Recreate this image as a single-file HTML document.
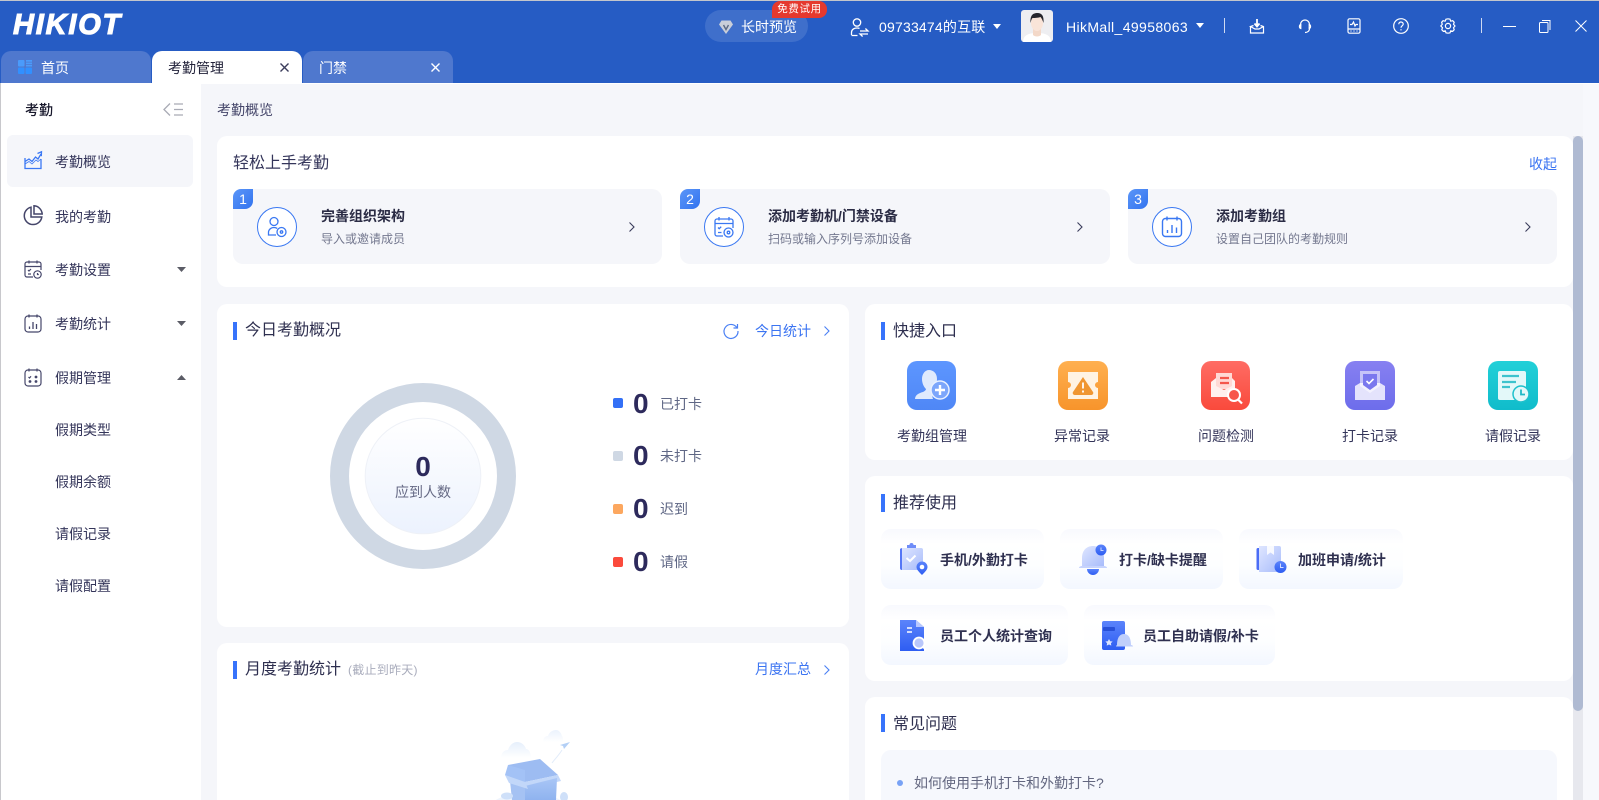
<!DOCTYPE html>
<html lang="zh"><head><meta charset="utf-8"><title>考勤</title>
<style>
*{box-sizing:border-box;margin:0;padding:0}
html,body{width:1599px;height:800px;overflow:hidden;background:#fff}
body{position:relative;font-family:"Liberation Sans","Noto Sans CJK SC",sans-serif;color:#2e2f4f;font-size:14px}
.a{position:absolute}
.t{position:absolute;white-space:nowrap;line-height:20px;height:20px}
svg{position:absolute;overflow:visible}
.card{position:absolute;background:#fff;border-radius:10px}
.bar{position:absolute;width:4px;height:18px;background:#3773fb}
.h{position:absolute;white-space:nowrap;font-size:16px;line-height:22px;color:#2e2f4f}
.blue{color:#3b74f2}
.w{color:#fff}
.nav{position:absolute;left:55px;white-space:nowrap;line-height:20px;color:#34355a}
.step{position:absolute;top:189px;height:75px;background:#f5f6fa;border-radius:10px}
.badge{position:absolute;left:0;top:0;width:20px;height:20px;background:linear-gradient(135deg,#5b96f8,#3273ef);border-radius:8px 0 8px 0;color:#fff;font-size:14px;line-height:20px;text-align:center}
.st{position:absolute;white-space:nowrap;font-size:14px;font-weight:700;line-height:20px;color:#2b2c45}
.ss{position:absolute;white-space:nowrap;font-size:12px;line-height:18px;color:#74788f}
.qi{position:absolute;top:361px;width:49px;height:49px;border-radius:10px}
.ql{position:absolute;top:426px;width:100px;text-align:center;line-height:20px;color:#34355a}
.chip{position:absolute;height:60px;border-radius:10px;background:linear-gradient(180deg,#f8f9fe 0%,#fff 25%,#fdfeff 60%,#f3f7ff 100%)}
.cl{position:absolute;white-space:nowrap;font-weight:700;font-size:14px;line-height:20px;color:#2f3050}
.sq{position:absolute;left:613px;width:10px;height:10px;border-radius:2px}
.n{position:absolute;left:633px;font-size:28px;font-weight:700;line-height:32px;color:#2d2a5c}
.l{position:absolute;left:660px;line-height:20px;color:#5f6785}
</style></head><body>

<!-- header -->
<div class="a" style="left:0;top:0;width:1599px;height:83px;background:#265cc4"></div>
<div class="a" style="left:0;top:0;width:1599px;height:1px;background:#c4c6cc"></div>
<div class="t w" style="left:13px;top:9px;height:33px;line-height:33px;font-size:29px;font-weight:700;font-style:italic;letter-spacing:1.800px;-webkit-text-stroke:1.100px #fff">HIKIOT</div>

<div class="a" style="left:705px;top:10px;width:103px;height:32px;border-radius:16px;background:#3f6fcb"></div>
<svg style="left:718px;top:19px" width="16" height="16" viewBox="0 0 16 16"><path d="M3.500 1.500h9L15 5.500 8 15 1 5.500z" fill="#c9ced9"/><path d="M5.500 6 8 10.500 10.500 6" fill="none" stroke="#5c6a84" stroke-width="1.400"/></svg>
<div class="t w" style="left:741px;top:17px">长时预览</div>
<div class="a w" style="left:772px;top:1px;width:55px;height:17px;background:#e5392e;border-radius:8px 8px 8px 0;font-size:10.500px;line-height:17px;text-align:center;letter-spacing:.6px">免费试用</div>

<svg style="left:850px;top:17px" width="20" height="22" viewBox="0 0 20 22" fill="none" stroke="#fff" stroke-width="1.300"><circle cx="7" cy="5.500" r="3.700"/><path d="M1.500 18v-2.500c0-2.600 2.200-4.500 5.500-4.500 1 0 1.700.1 2.500.5M1.500 18.500h6"/><path d="M10 14h8l-2.600-2.500M18 17h-8l2.600 2.500"/></svg>
<div class="t w" style="left:879px;top:17px;letter-spacing:.2px">09733474的互联</div>
<svg style="left:993px;top:24px" width="8" height="5"><path d="M0 0h8L4 5z" fill="#fff"/></svg>
<div class="a" style="left:1021px;top:10px;width:32px;height:32px;border-radius:3px;background:#eeeef1;overflow:hidden">
<svg style="left:0;top:0" width="32" height="32" viewBox="0 0 32 32"><path d="M2 32c0-7 6-9 14-9s14 2 14 9z" fill="#fff"/><path d="M12 18h8v7c-2 2-6 2-8 0z" fill="#f3d8c8"/><ellipse cx="16" cy="13" rx="6" ry="8" fill="#f9e4d8"/><path d="M9.500 13C9 5 12 3 16.500 3S23 6 22.500 13c-1-3-2-5-3-6-3 1-7 1-8 1-1 1-1.500 3-2 5z" fill="#26262c"/></svg></div>
<div class="t w" style="left:1066px;top:17px;letter-spacing:.38px">HikMall_49958063</div>
<svg style="left:1196px;top:23px" width="8" height="5"><path d="M0 0h8L4 5z" fill="#fff"/></svg>
<div class="a" style="left:1224px;top:18px;width:1px;height:15px;background:#cfdaf2"></div>
<svg style="left:1249px;top:18px" width="16" height="16" viewBox="0 0 16 16" fill="none" stroke="#fff" stroke-width="1.200"><path d="M1.500 8.500V15h13V8.500l-3-1M4.500 7.500l-3 1 4.500 2.500h4l4.500-2.500"/><path d="M8 1v6.500M5.500 5.500 8 8.500l2.500-3" stroke-width="1.800"/></svg>
<svg style="left:1297px;top:18px" width="16" height="16" viewBox="0 0 16 16" fill="none" stroke="#fff" stroke-width="1.200"><path d="M3.500 8.500V6.500a4.500 4.500 0 0 1 9 0M12.500 9v1.500c0 2.500-2 4-4.500 4"/><path d="M3.800 6.500C2 7 2 10 3.800 10.500zM12.200 6.500c1.800.5 1.800 3.500 0 4z"/></svg>
<svg style="left:1346px;top:18px" width="16" height="16" viewBox="0 0 16 16" fill="none" stroke="#fff" stroke-width="1.200"><rect x="2" y=".8" width="12" height="14.400" rx="1.500"/><path d="M2 11h12M4 6.500h2l1.500-2.500L9 8l1-1.500h2M4.500 13h1M7.500 13h1M10.500 13h1"/></svg>
<svg style="left:1393px;top:18px" width="16" height="16" viewBox="0 0 16 16" fill="none" stroke="#fff" stroke-width="1.200"><circle cx="8" cy="8" r="7.300"/><path d="M5.800 6.200C5.800 4.800 6.800 4 8 4s2.200.9 2.200 2.100C10.200 7.800 8 7.900 8 9.700"/><path d="M8 11.200v1.200"/></svg>
<svg style="left:1440px;top:17px" width="16" height="18" viewBox="0 0 16 18" fill="none" stroke="#fff" stroke-width="1.200"><path d="M6 1.200 8 .8l2 .4.700 2 2-.5 1.500 1.600-.7 2 1.500 1.700-1.500 1.700.7 2-1.500 1.600-2-.5-.7 2-2 .4-2-.4-.7-2-2 .5-1.500-1.600.7-2L.8 8l1.500-1.700-.7-2 1.500-1.600 2 .5z" transform="translate(0 1)"/><circle cx="8" cy="9" r="2.600"/></svg>
<div class="a" style="left:1481px;top:18px;width:1px;height:15px;background:#cfdaf2"></div>
<div class="a" style="left:1503px;top:26px;width:13px;height:1px;background:#fff"></div>
<svg style="left:1539px;top:20px" width="12" height="13" viewBox="0 0 12 13" fill="none" stroke="#fff" stroke-width="1"><rect x=".5" y="2.500" width="8.500" height="10" rx="1"/><path d="M3 .5h8v9.500"/></svg>
<svg style="left:1575px;top:20px" width="12" height="12" viewBox="0 0 12 12" fill="none" stroke="#fff" stroke-width="1"><path d="M.5.500l11 11M11.500.500l-11 11"/></svg>

<!-- tabs -->
<div class="a" style="left:1px;top:51px;width:150px;height:32px;background:#4f78ce;border-radius:10px 10px 0 0"></div>
<div class="a" style="left:152px;top:51px;width:150px;height:33px;background:#fff;border-radius:10px 10px 0 0"></div>
<div class="a" style="left:303px;top:51px;width:150px;height:32px;background:#4f78ce;border-radius:10px 10px 0 0"></div>
<svg style="left:18px;top:60px" width="14" height="14" viewBox="0 0 14 14"><rect width="6.500" height="6.500" rx="1" fill="#4a9bfb"/><path d="M8 0h6v1.700H8zM8 2.500h6v1.700H8zM8 5h6v1.500H8z" fill="#4a9bfb"/><rect y="7.500" width="6.500" height="6.500" rx="1" fill="#3190ff"/><rect x="7.500" y="7.500" width="6.500" height="6.500" rx="1" fill="#3190ff"/></svg>
<div class="t w" style="left:41px;top:58px">首页</div>
<div class="t" style="left:168px;top:58px;color:#22223a">考勤管理</div>
<svg style="left:280px;top:63px" width="9" height="9" fill="none" stroke="#3b3d5c" stroke-width="1.400"><path d="M.5.500l8 8M8.500.500l-8 8"/></svg>
<div class="t w" style="left:319px;top:58px">门禁</div>
<svg style="left:431px;top:63px" width="9" height="9" fill="none" stroke="#fff" stroke-width="1.400"><path d="M.5.500l8 8M8.500.500l-8 8"/></svg>

<!-- layout bg -->
<div class="a" style="left:0;top:83px;width:1px;height:717px;background:#c8c8cc"></div>
<div class="a" style="left:201px;top:84px;width:1398px;height:716px;background:#f5f6fa"></div>
<div class="a" style="left:1583px;top:84px;width:16px;height:716px;background:#f7f8fc"></div>

<!-- sidebar -->
<div class="t" style="left:25px;top:100px;color:#18182c;font-weight:500">考勤</div>
<svg style="left:163px;top:103px" width="21" height="13" fill="none" stroke="#a9abb5" stroke-width="1.300"><path d="M7 .5 1 6.500l6 6M11 1h9M11 6.500h9M11 12h9"/></svg>
<div class="a" style="left:7px;top:135px;width:186px;height:52px;background:#f5f6fa;border-radius:6px"></div>
<svg style="left:24px;top:151px" width="18" height="19" viewBox="0 0 18 19" fill="none" stroke="#3b78f4" stroke-width="1.300"><path d="M1 7v10.500h16V8"/><path d="M1 10.500 5 8l3 2.500L11.500 6 14 8l3-5"/><path d="M13.500 2.500 17.500.8l-.2 4.400"/><path d="M1 13l4-2.500 3 2.500 4-4 2 1.500 3-2.500" stroke-width=".8"/></svg>
<div class="nav blue" style="top:152px">考勤概览</div>
<svg style="left:23px;top:205px" width="20" height="20" viewBox="0 0 20 20" fill="none" stroke="#45466a" stroke-width="1.500"><path d="M8 2.200A8.800 8.800 0 1 0 18.800 12H8z"/><path d="M11 .8A8.800 8.800 0 0 1 19.200 9H11z"/></svg>
<div class="nav" style="top:207px">我的考勤</div>
<svg style="left:24px;top:260px" width="18" height="19" viewBox="0 0 18 19" fill="none" stroke="#45466a" stroke-width="1.200"><path d="M9 17H3a2 2 0 0 1-2-2V4a2 2 0 0 1 2-2h12a2 2 0 0 1 2 2v6M1 6.500h16M5 .5v3M13 .5v3M4 10l1 1 2-2M4 14h3"/><circle cx="13.500" cy="14.500" r="3.700"/><path d="M13.500 13v1.500h1.300"/></svg>
<div class="nav" style="top:260px">考勤设置</div>
<svg style="left:177px;top:267px" width="9" height="5"><path d="M0 0h9L4.500 5z" fill="#5b5c66"/></svg>
<svg style="left:24px;top:314px" width="18" height="19" viewBox="0 0 18 19" fill="none" stroke="#45466a" stroke-width="1.200"><rect x="1" y="2" width="16" height="16" rx="3"/><path d="M5 .5v3M13 .5v3M5.500 15v-2.500M9 15V8M12.500 15v-5" stroke-width="1.300"/></svg>
<div class="nav" style="top:314px">考勤统计</div>
<svg style="left:177px;top:321px" width="9" height="5"><path d="M0 0h9L4.500 5z" fill="#5b5c66"/></svg>
<svg style="left:24px;top:368px" width="18" height="19" viewBox="0 0 18 19" fill="none" stroke="#45466a" stroke-width="1.200"><rect x="1" y="2" width="16" height="16" rx="3"/><path d="M5 .5v3M13 .5v3"/><path d="M4.500 9l1 1 1.500-1.800"/><circle cx="12" cy="9" r="1.400" fill="#45466a" stroke="none"/><circle cx="6" cy="13.500" r="1.400" fill="#45466a" stroke="none"/><circle cx="12" cy="13.500" r="1.400" fill="#45466a" stroke="none"/></svg>
<div class="nav" style="top:368px">假期管理</div>
<svg style="left:177px;top:375px" width="9" height="5"><path d="M0 5h9L4.500 0z" fill="#5b5c66"/></svg>
<div class="nav" style="top:420px">假期类型</div>
<div class="nav" style="top:472px">假期余额</div>
<div class="nav" style="top:524px">请假记录</div>
<div class="nav" style="top:576px">请假配置</div>

<!-- breadcrumb -->
<div class="t" style="left:217px;top:100px;color:#45466a">考勤概览</div>

<!-- card 1 -->
<div class="card" style="left:217px;top:136px;width:1356px;height:151px"></div>
<div class="h" style="left:233px;top:153px;color:#34355a">轻松上手考勤</div>
<div class="t blue" style="left:1529px;top:154px">收起</div>

<div class="step" style="left:233px;width:429px"><div class="badge">1</div></div>
<svg style="left:257px;top:207px" width="40" height="40" viewBox="0 0 40 40" fill="none" stroke="#3a78f2"><circle cx="20" cy="20" r="19.500" fill="#fff"/><g stroke-width="1.300"><circle cx="17" cy="14.500" r="4"/><path d="M19 28h-7.500v-2.500c0-3 2.500-5 5.500-5 1.200 0 2.300.3 3.200.9"/><circle cx="24.500" cy="25" r="4.500"/><circle cx="24.500" cy="25" r="1.200"/></g></svg>
<div class="st" style="left:321px;top:206px">完善组织架构</div>
<div class="ss" style="left:321px;top:230px">导入或邀请成员</div>
<svg style="left:629px;top:222px" width="6" height="10" fill="none" stroke="#3b3d5c" stroke-width="1.100"><path d="M.5.500 5 5 .5 9.500"/></svg>

<div class="step" style="left:680px;width:430px"><div class="badge">2</div></div>
<svg style="left:704px;top:207px" width="40" height="40" viewBox="0 0 40 40" fill="none" stroke="#3a78f2"><circle cx="20" cy="20" r="19.500" fill="#fff"/><g stroke-width="1.300"><path d="M19 29h-6a2 2 0 0 1-2-2V14a2 2 0 0 1 2-2h14a2 2 0 0 1 2 2v7M11 16.500h18M15 10v3.500M25 10v3.500M14 20.500l1.200 1.200 2-2M14 25.500h3.500"/><circle cx="24.500" cy="25.500" r="4.500"/><circle cx="24.500" cy="25.500" r="1.300"/></g></svg>
<div class="st" style="left:768px;top:206px">添加考勤机/门禁设备</div>
<div class="ss" style="left:768px;top:230px">扫码或输入序列号添加设备</div>
<svg style="left:1077px;top:222px" width="6" height="10" fill="none" stroke="#3b3d5c" stroke-width="1.100"><path d="M.5.500 5 5 .5 9.500"/></svg>

<div class="step" style="left:1128px;width:429px"><div class="badge">3</div></div>
<svg style="left:1152px;top:207px" width="40" height="40" viewBox="0 0 40 40" fill="none" stroke="#3a78f2"><circle cx="20" cy="20" r="19.500" fill="#fff"/><g stroke-width="1.400"><rect x="10.500" y="11.500" width="19" height="18" rx="3"/><path d="M15 9.500v4M25 9.500v4M15.500 26v-3M20 26v-8M24.500 26v-5.500"/></g></svg>
<div class="st" style="left:1216px;top:206px">添加考勤组</div>
<div class="ss" style="left:1216px;top:230px">设置自己团队的考勤规则</div>
<svg style="left:1525px;top:222px" width="6" height="10" fill="none" stroke="#3b3d5c" stroke-width="1.100"><path d="M.5.500 5 5 .5 9.500"/></svg>

<!-- today card -->
<div class="card" style="left:217px;top:304px;width:632px;height:323px"></div>
<div class="bar" style="left:233px;top:322px"></div>
<div class="h" style="left:245px;top:320px">今日考勤概况</div>
<svg style="left:723px;top:323px" width="16" height="16" viewBox="0 0 16 16" fill="none" stroke="#4a80f4" stroke-width="1.200"><path d="M13.800 4.500A7 7 0 1 0 15 8"/><path d="M14.500 1v4h-4"/></svg>
<div class="t blue" style="left:755px;top:321px">今日统计</div>
<svg style="left:824px;top:326px" width="6" height="10" fill="none" stroke="#4a80f4" stroke-width="1.100"><path d="M.5.500 5 5 .5 9.500"/></svg>

<svg style="left:323px;top:376px" width="200" height="200" viewBox="0 0 200 200"><defs><linearGradient id="dg" x1="0" y1="0" x2="0" y2="1"><stop offset="0" stop-color="#fff"/><stop offset="1" stop-color="#ecf2fe"/></linearGradient></defs><circle cx="100" cy="100" r="83.500" fill="none" stroke="#cfd8e4" stroke-width="19"/><circle cx="100" cy="100" r="57.800" fill="url(#dg)" stroke="#eef1f7" stroke-width="1"/></svg>
<div class="a" style="left:373px;top:451px;width:100px;text-align:center;font-size:28px;font-weight:700;line-height:32px;color:#2d2a5c">0</div>
<div class="a" style="left:373px;top:482px;width:100px;text-align:center;line-height:20px;color:#666a85">应到人数</div>

<div class="sq" style="top:398px;background:#3370f6"></div><div class="n" style="top:388px">0</div><div class="l" style="top:394px">已打卡</div>
<div class="sq" style="top:451px;background:#cfd8e4"></div><div class="n" style="top:440px">0</div><div class="l" style="top:446px">未打卡</div>
<div class="sq" style="top:504px;background:#fca75f"></div><div class="n" style="top:493px">0</div><div class="l" style="top:499px">迟到</div>
<div class="sq" style="top:557px;background:#fb4a3c"></div><div class="n" style="top:546px">0</div><div class="l" style="top:552px">请假</div>

<!-- monthly card -->
<div class="card" style="left:217px;top:643px;width:632px;height:170px"></div>
<div class="bar" style="left:233px;top:661px"></div>
<div class="h" style="left:245px;top:659px">月度考勤统计</div>
<div class="t" style="left:348px;top:660px;font-size:12px;letter-spacing:.25px;color:#a9acbc">(截止到昨天)</div>
<div class="t blue" style="left:755px;top:659px">月度汇总</div>
<svg style="left:824px;top:665px" width="6" height="10" fill="none" stroke="#4a80f4" stroke-width="1.100"><path d="M.5.500 5 5 .5 9.500"/></svg>
<svg style="left:440px;top:700px" width="160" height="100" viewBox="0 0 160 100"><defs><linearGradient id="c1" x1="0" y1="0" x2="0" y2="1"><stop offset="0" stop-color="#e6effc"/><stop offset="1" stop-color="#fff"/></linearGradient><linearGradient id="b1" x1="0" y1="0" x2="0" y2="1"><stop offset="0" stop-color="#a9c6f6"/><stop offset="1" stop-color="#8fb3ef"/></linearGradient></defs>
<ellipse cx="88" cy="108" rx="38" ry="15" fill="#eef4fd"/>
<path d="M61 58c0-5 3-8 7-8 2-6 6-8 9-8 4 0 8 3 9 7 3 0 5 4 5 9z" fill="url(#c1)"/>
<path d="M103 42c0-4 2-6 5-6 1-4 5-6 8-6 3 0 5 3 6 6 1 1 1 3 1 6z" fill="url(#c1)" opacity=".8"/>
<path d="M120 45 130 42l-6 7-1-3z" fill="#b4d0f6"/><path d="M122 50c-3 5-7 9-10 13" stroke="#e2ecfa" fill="none"/>
<path d="M68 65l32-6 18 16-33 7z" fill="#9dbcf2"/>
<path d="M68 65 65 75l5 6 15 1V70z" fill="#a3c2f6"/>
<path d="M70 81l15 5v14H72z" fill="#a5c2f3"/>
<path d="M85 82l33-7 3 6-33 8-3 12z" fill="#c2d7f9"/>
<path d="M85 86l32-8-1 22H85z" fill="url(#b1)"/>
<path d="M65 75l20 7 3 7-19-6z" fill="#c2d7f9"/>
<ellipse cx="67" cy="96" rx="6" ry="3.500" fill="#cfe0f9"/><ellipse cx="124" cy="97" rx="4" ry="5" fill="#cfe0f9"/></svg>

<!-- quick -->
<div class="card" style="left:865px;top:304px;width:708px;height:156px"></div>
<div class="bar" style="left:881px;top:322px"></div>
<div class="h" style="left:893px;top:321px">快捷入口</div>

<div class="qi" style="left:907px;background:linear-gradient(#5d96ff,#4f87f6)"><svg width="49" height="49" viewBox="0 0 49 49"><path d="M8 38c0-4 4-6 8-7 2-1 3-2 3-3-3-3-4-7-4-10 0-5 3-9 7-9s8 3 8 9c0 2-.5 4-1 6-4 2-5 8-3 14z" fill="#dfeafd"/><circle cx="33" cy="29" r="9" fill="#7ca6fb" stroke="#e8f0ff" stroke-width="1.500"/><path d="M28 29h10M33 24v10" stroke="#fff" stroke-width="2.400"/></svg></div>
<div class="qi" style="left:1058px;width:50px;background:linear-gradient(#ffb050,#f7942b)"><svg width="50" height="49" viewBox="0 0 50 49"><path d="M10 11h30v10a3 3 0 0 0 0 6v11H10V27a3 3 0 0 0 0-6z" fill="#fff3e3"/><path d="M25 16l10 15a2 2 0 0 1-2 3H17a2 2 0 0 1-2-3z" fill="#f09631"/><path d="M25 21.500v6M25 29.500v2" stroke="#fff" stroke-width="1.800"/></svg></div>
<div class="qi" style="left:1201px;background:linear-gradient(#ff6c64,#f94a3c)"><svg width="49" height="49" viewBox="0 0 49 49"><path d="M15 12h16v16H15z" fill="#ffd9d5"/><path d="M19 17h9M19 22h9" stroke="#f4574c" stroke-width="2.200"/><path d="M10 21l5-4v8l8 4 8-4v-8l3 3v16H10z" fill="#fff0ee"/><circle cx="33" cy="34" r="6" fill="#f7564b" stroke="#fff" stroke-width="2"/><path d="M37 38.500l4 4" stroke="#fff" stroke-width="2.200"/></svg></div>
<div class="qi" style="left:1345px;width:50px;background:linear-gradient(#8780f1,#6d6deb)"><svg width="50" height="49" viewBox="0 0 50 49"><path d="M10 25l5-3h20l5 3v14H10z" fill="#e4e3fc"/><path d="M15 10h20v15l-10 7-10-7z" fill="#fff" opacity=".55"/><path d="M18 13h14v11l-7 5-7-5z" fill="#7a78ee"/><path d="M21.500 20l2.500 2.500 4.500-4.500" fill="none" stroke="#fff" stroke-width="1.600"/></svg></div>
<div class="qi" style="left:1488px;width:50px;background:linear-gradient(#22d0d8,#10bccb)"><svg width="50" height="49" viewBox="0 0 50 49"><rect x="10" y="10" width="28" height="29" rx="2" fill="#e3f8f9"/><path d="M14 15h17M14 21h14M14 26h8" stroke="#3dc3cd" stroke-width="2.200"/><circle cx="33" cy="33" r="8" fill="#e3f8f9" stroke="#1ec0cc" stroke-width="1.500"/><path d="M33 28.500V33.500h4" fill="none" stroke="#1fb9c6" stroke-width="1.800"/></svg></div>
<div class="ql" style="left:882px">考勤组管理</div>
<div class="ql" style="left:1032px">异常记录</div>
<div class="ql" style="left:1176px">问题检测</div>
<div class="ql" style="left:1320px">打卡记录</div>
<div class="ql" style="left:1463px">请假记录</div>

<!-- recommended -->
<div class="card" style="left:865px;top:476px;width:708px;height:205px"></div>
<div class="bar" style="left:881px;top:494px"></div>
<div class="h" style="left:893px;top:493px">推荐使用</div>
<svg width="0" height="0"><defs><linearGradient id="ig" x1="0" y1="0" x2="1" y2="1"><stop offset="0" stop-color="#dfe6ff"/><stop offset="1" stop-color="#a8bcfb"/></linearGradient><linearGradient id="ib" x1="0" y1="0" x2="0" y2="1"><stop offset="0" stop-color="#5b84fb"/><stop offset="1" stop-color="#2e5df2"/></linearGradient></defs></svg>

<div class="chip" style="left:881px;top:529px;width:163px"></div>
<svg style="left:899px;top:543px" width="30" height="34" viewBox="0 0 30 34"><path d="M1 5h21a2 2 0 0 1 2 2v20H3a2 2 0 0 1-2-2z" fill="url(#ig)"/><path d="M1 6v19a2 2 0 0 0 2 2V5z" fill="#5576f6"/><path d="M8 5h9V2h-2.500a2 2 0 0 0-4 0H8z" fill="#6e8cf8"/><path d="M7.500 15l3.500 3 5.500-5.500" fill="none" stroke="#fff" stroke-width="2"/><path d="M23 32c-3-3-5.500-5.500-5.500-8a5.500 5.500 0 0 1 11 0c0 2.500-2.500 5-5.500 8z" fill="url(#ib)"/><circle cx="23" cy="24" r="2.300" fill="#fff"/></svg>
<div class="cl" style="left:940px;top:550px">手机/外勤打卡</div>

<div class="chip" style="left:1060px;top:529px;width:163px"></div>
<svg style="left:1078px;top:544px" width="30" height="32" viewBox="0 0 30 32"><path d="M4 22V14C4 6 9 2 15 2s11 4 11 12v8z" fill="url(#ig)"/><path d="M1 24c0-1.500 2-2 3-2h22c1 0 3 .5 3 2z" fill="#c6d3fd"/><path d="M9 25h12c0 3-2.500 6-6 6s-6-3-6-6z" fill="url(#ib)"/><circle cx="23" cy="6" r="5.500" fill="url(#ib)"/><path d="M23 3.500V6.500h2.500" fill="none" stroke="#c9d6ff" stroke-width="1"/></svg>
<div class="cl" style="left:1119px;top:550px">打卡/缺卡提醒</div>

<div class="chip" style="left:1239px;top:529px;width:164px"></div>
<svg style="left:1256px;top:545px" width="32" height="30" viewBox="0 0 32 30"><path d="M2 3h2v22H2a1.500 1.500 0 0 1-1.500-1.500v-19A1.500 1.500 0 0 1 2 3z" fill="#4a6cf6"/><path d="M3 1h20a2 2 0 0 1 2 2v24H3z" fill="url(#ig)"/><path d="M11 1h7v9l-3.500-2.500L11 10z" fill="#fff" opacity=".85"/><circle cx="24.500" cy="22" r="6" fill="url(#ib)"/><path d="M24.500 18.500V22.500h3" fill="none" stroke="#d3dcff" stroke-width="1"/></svg>
<div class="cl" style="left:1298px;top:550px">加班申请/统计</div>

<div class="chip" style="left:881px;top:605px;width:187px"></div>
<svg style="left:900px;top:620px" width="30" height="32" viewBox="0 0 30 32"><path d="M0 0h16l8 7v24H0z" fill="url(#ib)"/><path d="M16 0l8 7h-8z" fill="#b8c8fe"/><path d="M7 8h5M7 12h5" stroke="#fff" stroke-width="1.600"/><circle cx="19" cy="23" r="5.500" fill="#b9c7fb" stroke="#fff" stroke-width="1.800"/><path d="M23 27l3 3" stroke="#fff" stroke-width="1.800"/></svg>
<div class="cl" style="left:940px;top:626px">员工个人统计查询</div>

<div class="chip" style="left:1084px;top:605px;width:191px"></div>
<svg style="left:1102px;top:621px" width="32" height="30" viewBox="0 0 32 30"><rect x="0" y="0" width="23" height="29" rx="2" fill="url(#ib)"/><rect x="1" y="6" width="12" height="4" rx="1" fill="#2850d8"/><path d="M7 18l1.200 2.200 2.400.3-1.700 1.700.4 2.400L7 23.500l-2.300 1.100.4-2.400-1.700-1.700 2.400-.3z" fill="#dbe4ff"/><path d="M15 24c0-6 2-11 7-11s7 5 7 11c1 0 2 .5 2 1.500H14c0-1 1-1.500 1-1.500z" fill="#c0cffb"/></svg>
<div class="cl" style="left:1143px;top:626px">员工自助请假/补卡</div>

<!-- faq -->
<div class="card" style="left:865px;top:697px;width:708px;height:120px"></div>
<div class="bar" style="left:881px;top:714px"></div>
<div class="h" style="left:893px;top:714px">常见问题</div>
<div class="a" style="left:881px;top:750px;width:676px;height:70px;border-radius:10px;background:#f6f8fd"></div>
<div class="a" style="left:897px;top:780px;width:6px;height:6px;border-radius:50%;background:#78a2f5"></div>
<div class="t" style="left:914px;top:773px;color:#62667f">如何使用手机打卡和外勤打卡?</div>

<!-- scrollbar -->
<div class="a" style="left:1573px;top:136px;width:10px;height:664px;background:#e7e8ee"></div>
<div class="a" style="left:1573px;top:136px;width:10px;height:575px;background:#afbad2;border-radius:5px"></div>

</body></html>
